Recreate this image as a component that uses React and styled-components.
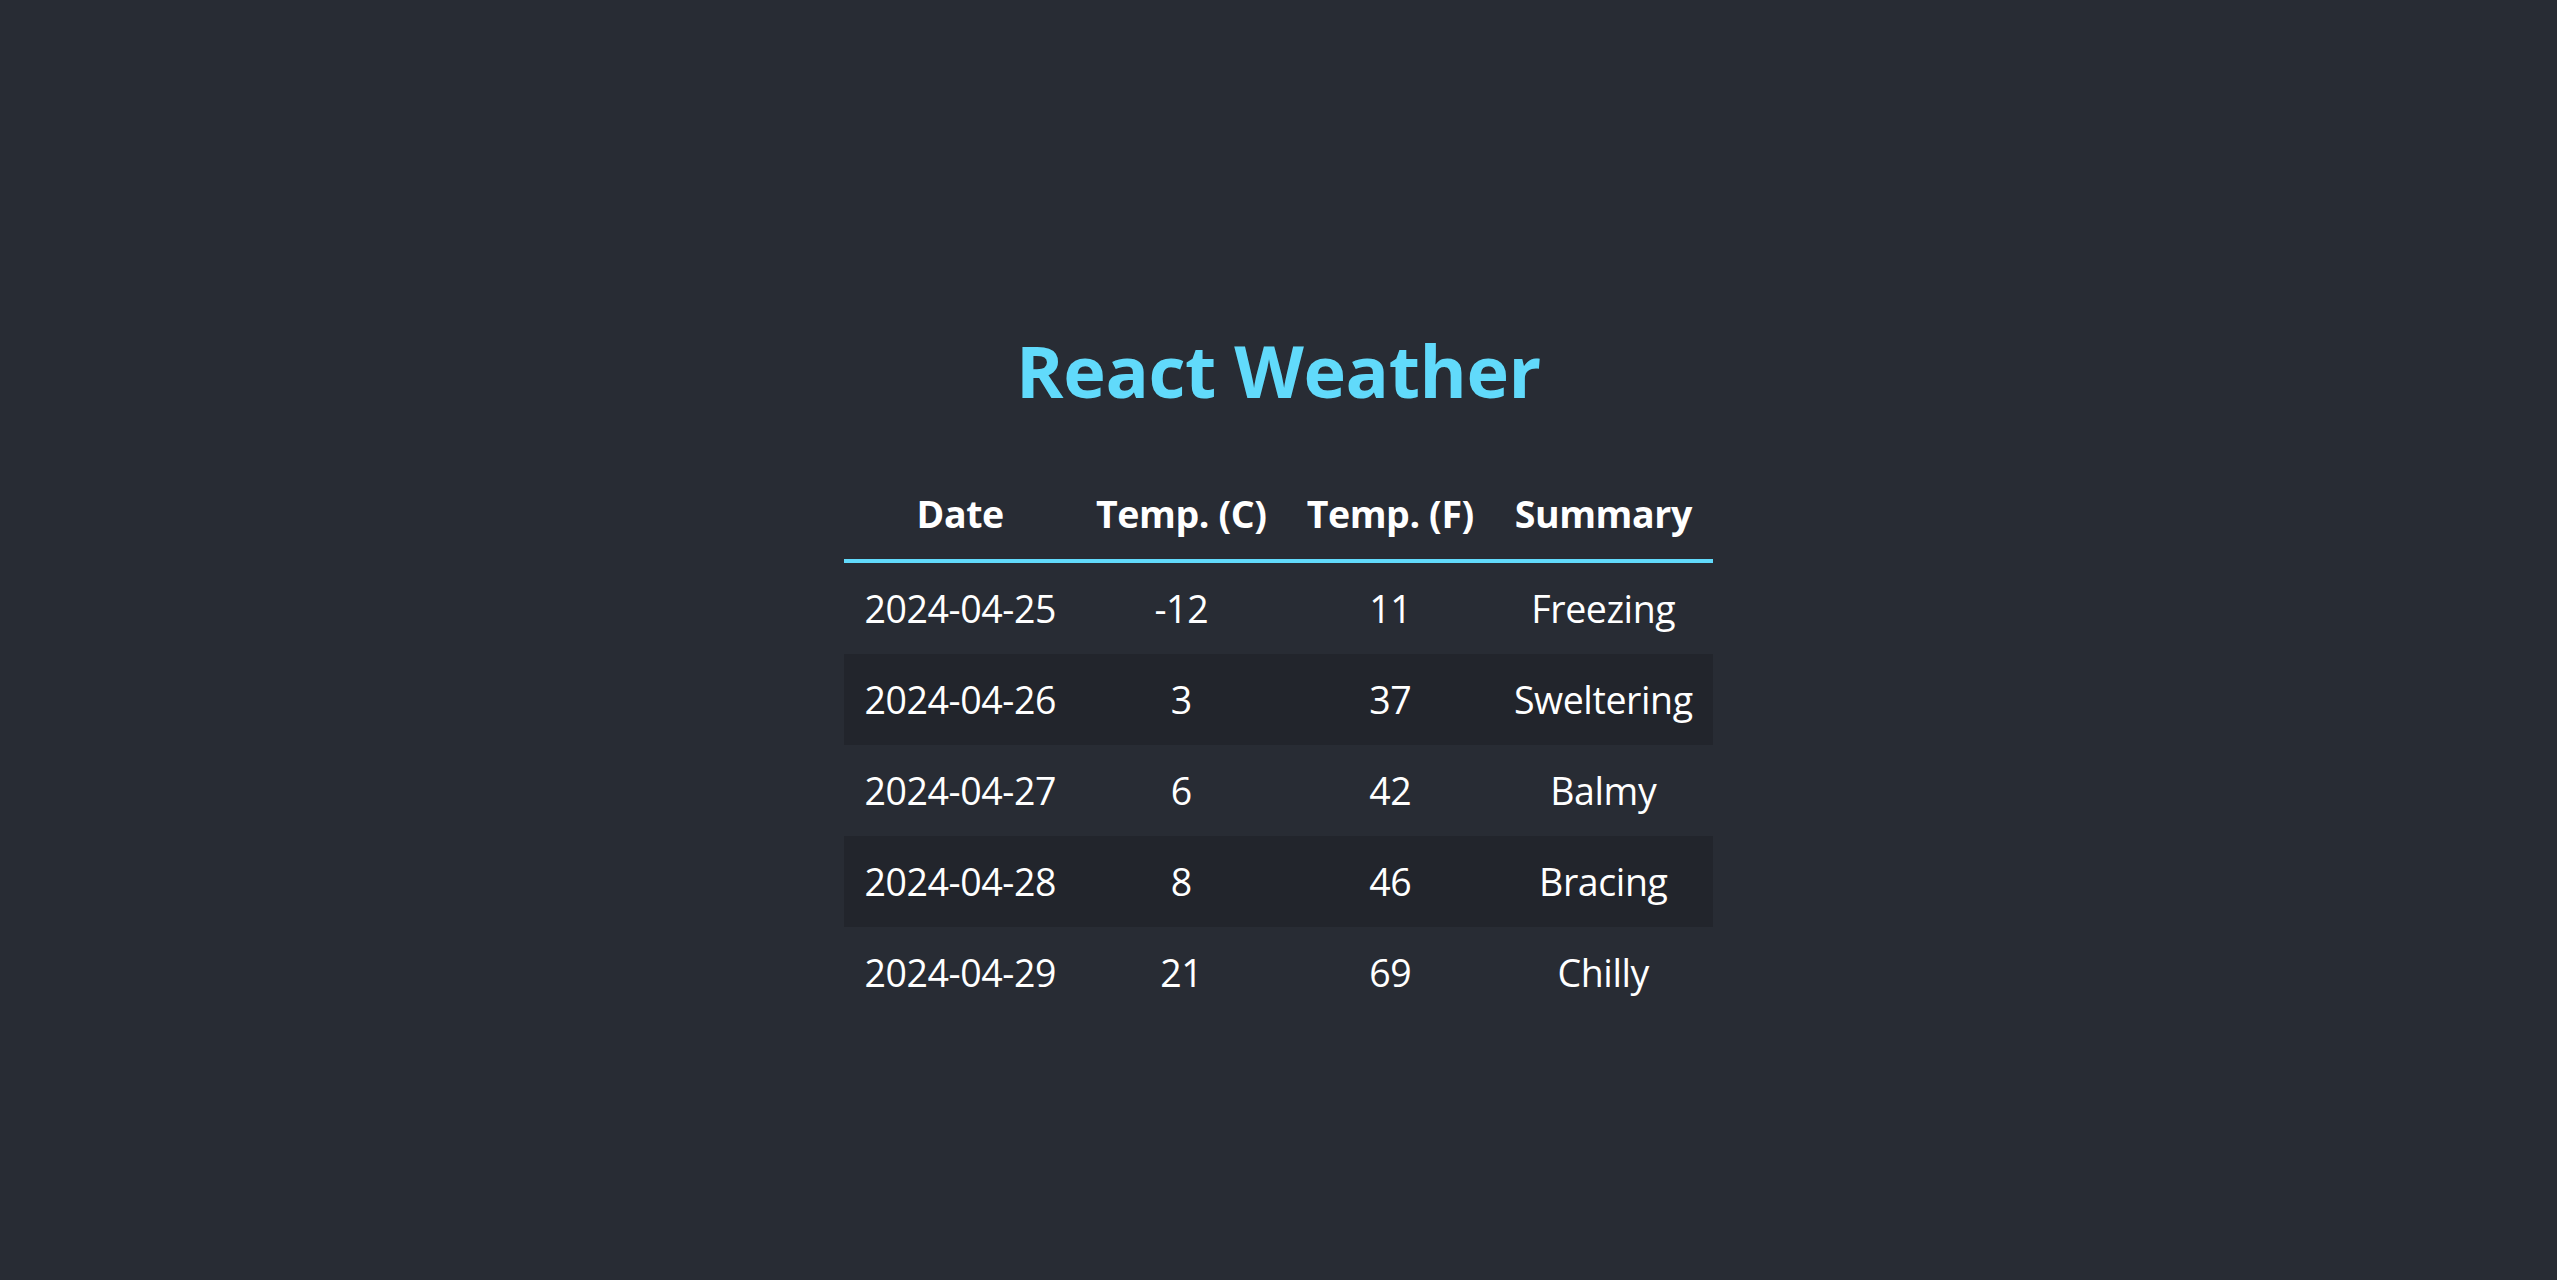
import styled, { createGlobalStyle } from "styled-components";

const GlobalStyle = createGlobalStyle`
  html, body {
    margin: 0;
    padding: 0;
    background: #282c34;
  }
  body {
    font-family: "Open Sans", "Noto Sans", sans-serif;
    color: #ffffff;
  }
`

const Page = styled.main`
  min-height: 100vh;
  box-sizing: border-box;
  padding-top: 321px;
  display: flex;
  flex-direction: column;
  align-items: center;
`

const Title = styled.h1`
  margin: 0 0 49px;
  font-size: 72px;
  font-weight: 700;
  line-height: 98px;
  letter-spacing: -0.4px;
  color: #61dafb;
`

const Table = styled.table`
  border-collapse: collapse;
  font-size: 37.5px;
  line-height: 51px;
  letter-spacing: -0.4px;
`

const HeadCell = styled.th`
  padding: 20px 20px;
  font-weight: 700;
  text-align: center;
  border-bottom: 4px solid #61dafb;
`

const Row = styled.tr`
  background: ${props => props.$striped ? "#22252c" : "transparent"};
`

const Cell = styled.td`
  padding: 20px 20px;
  text-align: center;
  white-space: nowrap;
`

const forecasts = [
  { date: "2024-04-25", tempC: -12, tempF: 11, summary: "Freezing" },
  { date: "2024-04-26", tempC: 3, tempF: 37, summary: "Sweltering" },
  { date: "2024-04-27", tempC: 6, tempF: 42, summary: "Balmy" },
  { date: "2024-04-28", tempC: 8, tempF: 46, summary: "Bracing" },
  { date: "2024-04-29", tempC: 21, tempF: 69, summary: "Chilly" },
];

export default function App() {
  return (
    <>
      <GlobalStyle />
      <Page>
        <Title>React Weather</Title>
        <Table>
          <thead>
            <tr>
              <HeadCell>Date</HeadCell>
              <HeadCell>Temp. (C)</HeadCell>
              <HeadCell>Temp. (F)</HeadCell>
              <HeadCell>Summary</HeadCell>
            </tr>
          </thead>
          <tbody>
            {forecasts.map((f, i) => (
              <Row key={f.date} $striped={i % 2 === 1}>
                <Cell>{f.date}</Cell>
                <Cell>{f.tempC}</Cell>
                <Cell>{f.tempF}</Cell>
                <Cell>{f.summary}</Cell>
              </Row>
            ))}
          </tbody>
        </Table>
      </Page>
    </>
  );
}
